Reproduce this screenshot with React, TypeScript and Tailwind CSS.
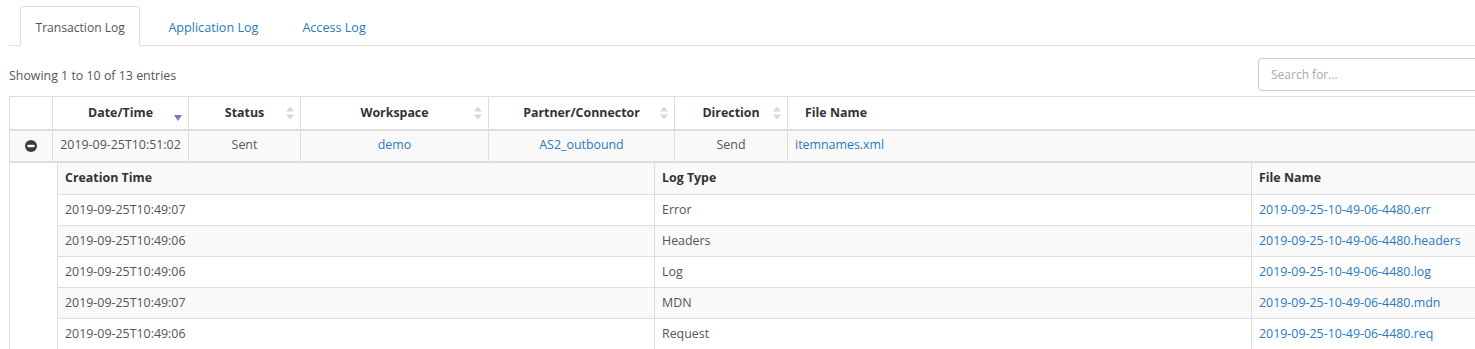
import React from 'react';

type SubRow = { time: string; type: string; file: string };

const subRows: SubRow[] = [
  { time: '2019-09-25T10:49:07', type: 'Error', file: '2019-09-25-10-49-06-4480.err' },
  { time: '2019-09-25T10:49:06', type: 'Headers', file: '2019-09-25-10-49-06-4480.headers' },
  { time: '2019-09-25T10:49:06', type: 'Log', file: '2019-09-25-10-49-06-4480.log' },
  { time: '2019-09-25T10:49:07', type: 'MDN', file: '2019-09-25-10-49-06-4480.mdn' },
  { time: '2019-09-25T10:49:06', type: 'Request', file: '2019-09-25-10-49-06-4480.req' },
];

function SortBoth() {
  return (
    <svg width="8" height="13" viewBox="0 0 8 13" className="absolute right-[6px] top-1/2 -translate-y-1/2">
      <path d="M4 0 L8 5 L0 5 Z" fill="#d6d6d6" />
      <path d="M4 13 L8 8 L0 8 Z" fill="#d6d6d6" />
    </svg>
  );
}

function SortDesc() {
  return (
    <svg width="8" height="6" viewBox="0 0 8 6" className="absolute right-[6px] top-[18px]">
      <path d="M0 0 L8 0 L4 6 Z" fill="#7478d6" />
    </svg>
  );
}

function MinusCircle() {
  return (
    <svg width="12" height="12" viewBox="0 0 12 12" className="inline-block">
      <circle cx="6" cy="6" r="6" fill="#3b3b3b" />
      <rect x="2.5" y="4.8" width="7" height="2.4" fill="#fff" />
    </svg>
  );
}

function Th({ children, sort, className = '' }: { children: React.ReactNode; sort?: 'both' | 'desc'; className?: string }) {
  return (
    <th className={`relative h-[33px] border border-[#ddd] border-b-2 pt-[2px] font-bold text-[#333] ${className}`}>
      {children}
      {sort === 'both' && <SortBoth />}
      {sort === 'desc' && <SortDesc />}
    </th>
  );
}

export default function App() {
  return (
    <div
      className="w-[1475px] h-[349px] overflow-hidden bg-white text-[12.4px] text-[#555]"
      style={{ fontFamily: '"Open Sans", "Noto Sans", sans-serif' }}
    >
      <div className="pl-[9px] pt-[6px]">
        <ul className="flex w-[1700px] border-b border-[#ddd]">
          <li className="-mb-px mr-[13px] ml-[11px] text-[12.1px]">
            <span className="block h-[40px] rounded-t-[4px] border border-[#ddd] border-b-white bg-white px-[14.5px] pt-[4px] leading-[34px] text-[#555]">
              Transaction Log
            </span>
          </li>
          <li className="-mb-px mr-[14px] text-[12.6px]">
            <span className="block h-[40px] px-[15px] pt-[5px] leading-[34px] text-[#2a7ac0]">Application Log</span>
          </li>
          <li className="-mb-px text-[12.6px]">
            <span className="block h-[40px] px-[15px] pt-[5px] leading-[34px] text-[#2a7ac0]">Access Log</span>
          </li>
        </ul>

        <div className="mt-[12px] flex h-[33px] items-center justify-between">
          <span className="pt-[4px] text-[#555]">Showing 1 to 10 of 13 entries</span>
          <input
            placeholder="Search for..."
            className="mr-[-40px] h-[33px] w-[257px] rounded-[4px] border border-[#ccc] px-[12px] text-[12px] placeholder:text-[#aaa] outline-none"
          />
        </div>

        <table className="mt-[5px] w-[1700px] table-fixed border-collapse">
          <colgroup>
            <col className="w-[43px]" />
            <col className="w-[136px]" />
            <col className="w-[112px]" />
            <col className="w-[188px]" />
            <col className="w-[186px]" />
            <col className="w-[113px]" />
            <col />
          </colgroup>
          <thead>
            <tr>
              <Th>{''}</Th>
              <Th sort="desc">Date/Time</Th>
              <Th sort="both">Status</Th>
              <Th sort="both">Workspace</Th>
              <Th sort="both">Partner/Connector</Th>
              <Th sort="both">Direction</Th>
              <Th className="pl-[17px] text-left">File Name</Th>
            </tr>
          </thead>
          <tbody>
            <tr className="h-[32px] bg-[#f9f9f9] text-center">
              <td className="border border-[#ddd] leading-none">
                <MinusCircle />
              </td>
              <td className="border border-[#ddd]">2019-09-25T10:51:02</td>
              <td className="border border-[#ddd] text-[#4f6140]">Sent</td>
              <td className="border border-[#ddd] text-[#2a7ac0]">demo</td>
              <td className="border border-[#ddd] text-[#2a7ac0]">AS2_outbound</td>
              <td className="border border-[#ddd]">Send</td>
              <td className="border border-[#ddd] pl-[7px] text-left text-[#2a7ac0]">itemnames.xml</td>
            </tr>
            <tr>
              <td colSpan={7} className="border border-[#ddd] border-t-2 p-0 pl-[47px]">
                <table className="w-[1791px] table-fixed border-collapse">
                  <thead>
                    <tr className="h-[32px] bg-[#f9f9f9] text-left">
                      <th className="w-[597px] border border-t-0 border-[#ddd] px-[7px] font-bold text-[#333]">Creation Time</th>
                      <th className="w-[597px] border border-t-0 border-[#ddd] px-[7px] font-bold text-[#333]">Log Type</th>
                      <th className="w-[597px] border border-t-0 border-[#ddd] px-[7px] font-bold text-[#333]">File Name</th>
                    </tr>
                  </thead>
                  <tbody>
                    {subRows.map((r, i) => (
                      <tr key={r.file} className={`h-[31px] ${i % 2 === 1 ? 'bg-[#f9f9f9]' : 'bg-white'}`}>
                        <td className="border border-[#ddd] px-[7px]">{r.time}</td>
                        <td className="border border-[#ddd] px-[7px]">{r.type}</td>
                        <td className="border border-[#ddd] px-[7px] text-[#2a7ac0]">{r.file}</td>
                      </tr>
                    ))}
                  </tbody>
                </table>
              </td>
            </tr>
          </tbody>
        </table>
      </div>
    </div>
  );
}
